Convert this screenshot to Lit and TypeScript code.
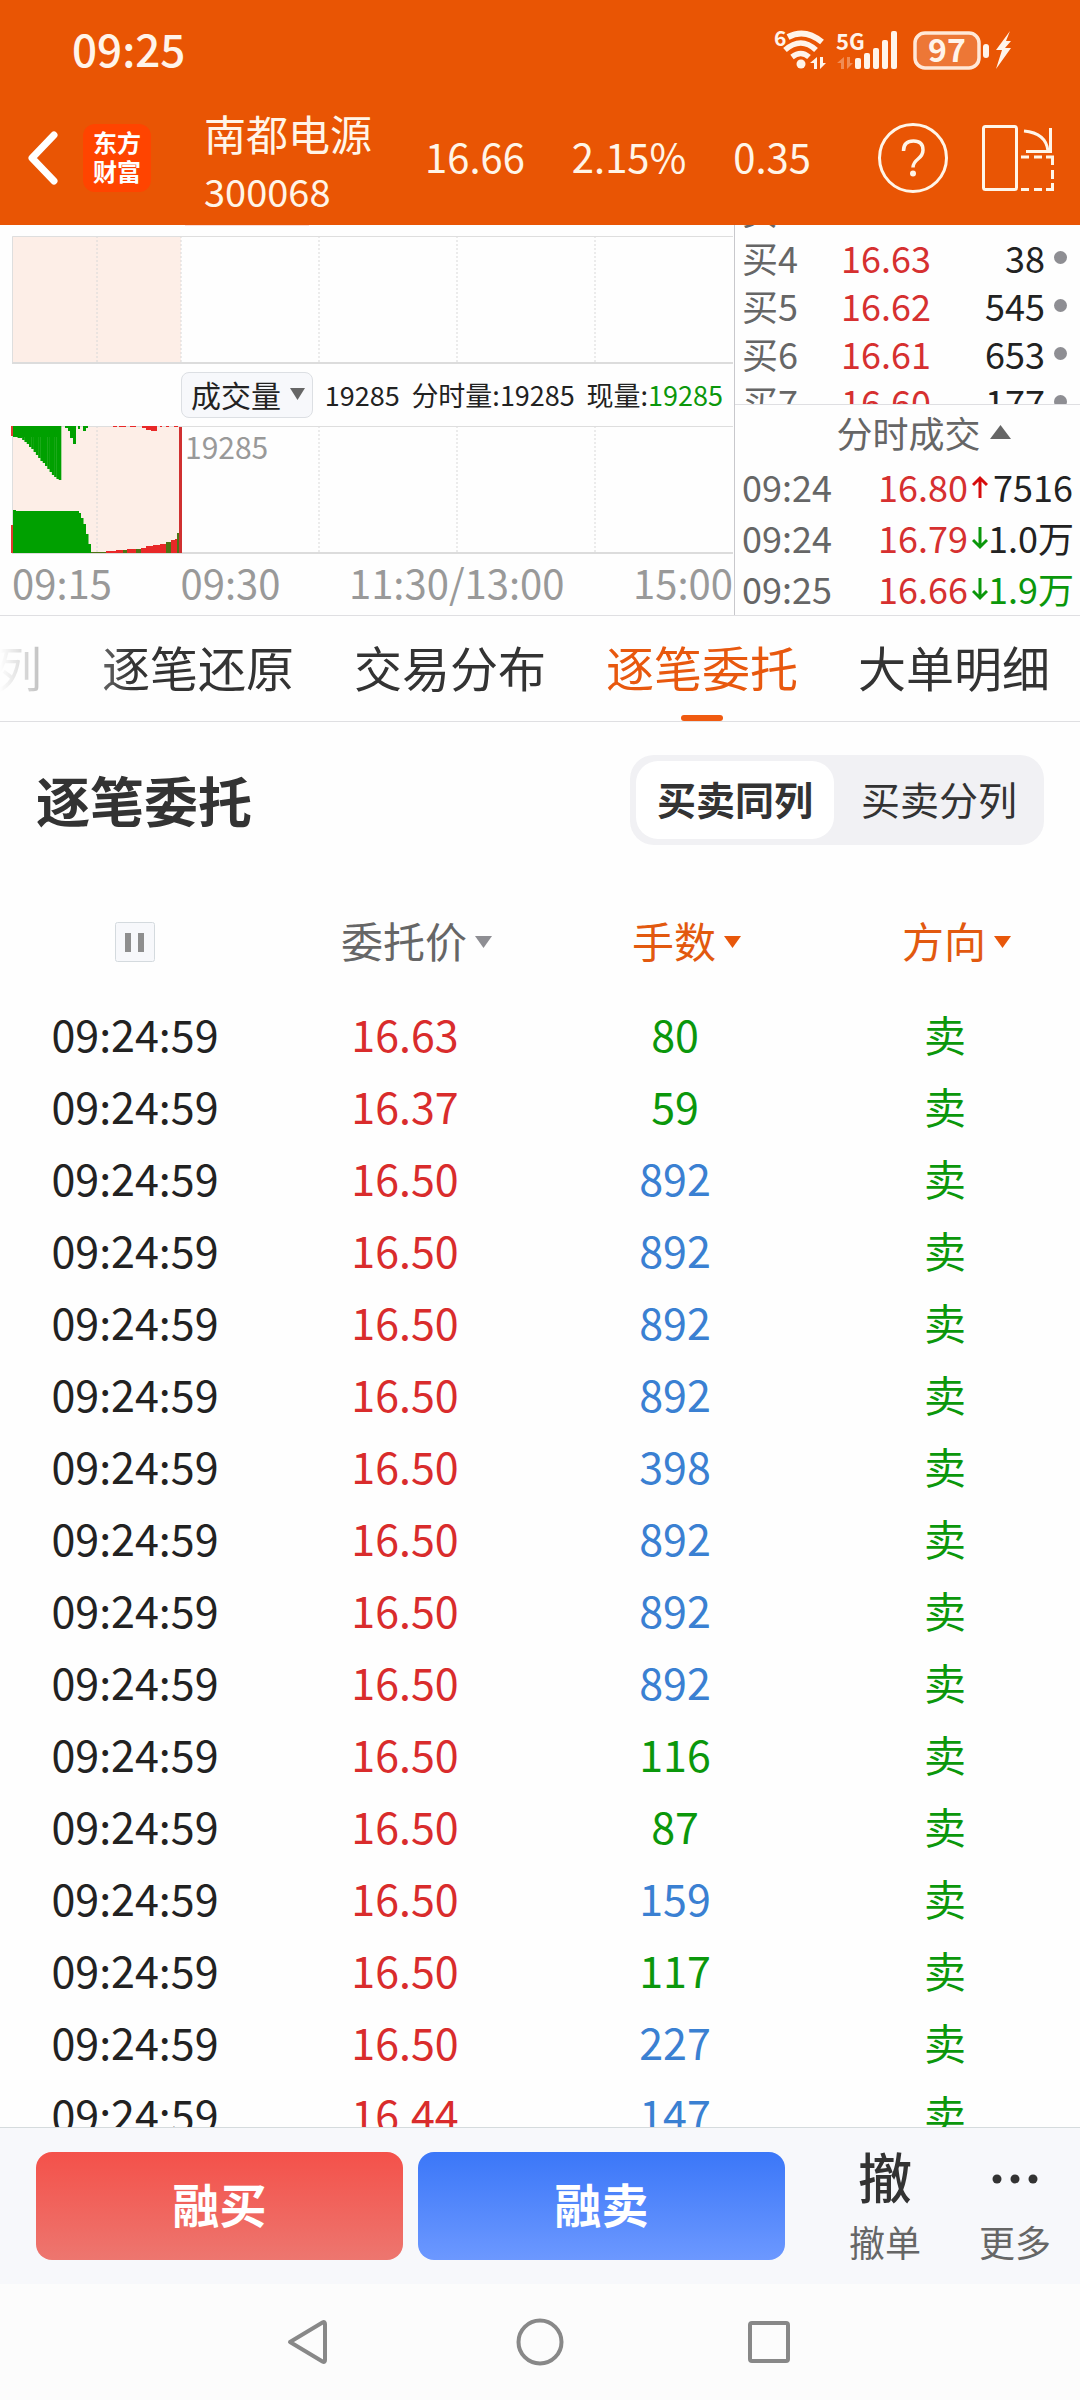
import { LitElement, html, svg, css } from "lit";
import { customElement, property, state } from "lit/decorators.js";
import { classMap } from "lit/directives/class-map.js";

const FONT = css`"Noto Sans CJK SC", "Noto Sans", sans-serif`;

const reset = css`
  * {
    box-sizing: border-box;
  }
  button {
    appearance: none;
    margin: 0;
    padding: 0;
    border: 0;
    background: none;
    color: inherit;
    font: inherit;
    cursor: pointer;
  }
  svg {
    display: block;
    flex: none;
  }
`;

@customElement("status-bar")
class StatusBar extends LitElement {
  static styles = [
    reset,
    css`
      :host {
        display: flex;
        align-items: center;
        justify-content: space-between;
        height: 96px;
        padding: 4px 66px 0 72px;
        color: #fff4ea;
      }
      .time {
        padding-bottom: 4px;
        font-size: 44px;
        line-height: 48px;
        font-weight: 500;
      }
      .icons {
        overflow: visible;
      }
      .icons text {
        font-family: ${FONT};
        font-weight: 700;
        fill: #fff4ea;
      }
    `,
  ];

  render() {
    return html`
      <span class="time">09:25</span>
      <svg class="icons" width="240" height="44" viewBox="0 0 240 44" fill="#fff4ea">
        <text x="0" y="18" font-size="21">6</text>
        <g fill="none" stroke="#fff4ea" stroke-width="6">
          <path d="M14 9 Q31 0 48 14" />
          <path d="M11 22 Q27 8 42 22" stroke-width="5.5" />
          <path d="M18 29 Q27 22 35 29" stroke-width="5.5" />
        </g>
        <circle cx="27" cy="36" r="4.5" />
        <path d="M43 29v12h-3v-6h-4zM46 29v12l6-6h-3v-6z" />
        <text x="62" y="22" font-size="22">5G</text>
        <g opacity="0.35">
          <path d="M70 29v12h-3v-6h-4zM73 29v12l6-6h-3v-6z" />
        </g>
        <rect x="81" y="30" width="6" height="11" rx="2" />
        <rect x="90" y="25" width="6" height="16" rx="2" />
        <rect x="99" y="20" width="6" height="21" rx="2" />
        <rect x="108" y="12" width="6" height="29" rx="2" />
        <rect x="117" y="3" width="6" height="38" rx="2" />
        <rect x="141" y="5" width="64" height="35" rx="10" fill="#ffffff" fill-opacity="0.2" stroke="#ffe8d8" stroke-width="3.5" />
        <text x="173" y="34" font-size="32" text-anchor="middle">97</text>
        <rect x="209" y="16" width="6" height="14" rx="3" />
        <path d="M236 3 222 22h6l-6 19 15-21h-6l6-7h-5z" />
      </svg>
    `;
  }
}

@customElement("stock-header")
class StockHeader extends LitElement {
  static styles = [
    reset,
    css`
      :host {
        display: flex;
        align-items: center;
        height: 129px;
        padding: 0 25px 6px 26px;
        color: #fff5e8;
      }
      .back {
        margin-right: 23px;
      }
      .logo {
        display: grid;
        place-content: center;
        width: 68px;
        height: 68px;
        padding-bottom: 4px;
        border-radius: 12px;
        background: #ff4400;
        color: #fff;
        font-size: 24px;
        line-height: 29px;
        font-weight: 700;
      }
      .name {
        display: grid;
        margin: 0 53px;
        padding-top: 8px;
        font-size: 42px;
        line-height: 58px;
        font-weight: 400;
      }
      .code {
        font-size: 38px;
      }
      .quote {
        display: flex;
        flex: 1;
        justify-content: space-between;
        padding-bottom: 4px;
        font-size: 40px;
        line-height: 58px;
      }
      .tools {
        display: flex;
        align-items: center;
        gap: 32px;
        margin-left: 66px;
      }
    `,
  ];

  render() {
    return html`
      <button class="back" aria-label="返回">
        <svg width="34" height="58" viewBox="0 0 34 58" fill="none" stroke="#fff" stroke-width="7" stroke-linecap="round" stroke-linejoin="round">
          <path d="M28 6 6 29l22 23" />
        </svg>
      </button>
      <span class="logo"><span>东方</span><span>财富</span></span>
      <span class="name"><span>南都电源</span><span class="code">300068</span></span>
      <span class="quote"><span>16.66</span><span>2.15%</span><span>0.35</span></span>
      <span class="tools">
        <button aria-label="帮助">
          <svg width="72" height="72" viewBox="0 0 72 72" fill="none" stroke="#fff5e8" stroke-width="3">
            <circle cx="36" cy="36" r="33.5" />
            <path d="M26.5 29q0-10 10-10 9.5 0 9.5 9 0 5-5 9-5 4-5 8.5" stroke-width="3.5" />
            <circle cx="36" cy="51.5" r="3" fill="#fff5e8" stroke="none" />
          </svg>
        </button>
        <button aria-label="横屏">
          <svg width="74" height="68" viewBox="0 0 74 68" fill="none" stroke="#fff5e8" stroke-width="3">
            <rect x="2.5" y="2.5" width="33" height="63" rx="2" />
            <path d="M43 7Q65 9 67 27M69.5 4v23.5H45" />
            <path d="M40 33h8M53 33h8M65 33h6.5v8M71.5 46v9M71.5 59v6.5H65M61 65.5h-8M48 65.5h-8" />
          </svg>
        </button>
      </span>
    `;
  }
}

/* One bar of the auction chart: [x, y, width, height, colour] in plot units. */
type Bar = [number, number, number, number, string];

const PLOT_W = 721;
const PLOT_H = 127;
const GREEN = "#00a000";
const RED = "#e82828";
const DARK = "#4c7414";

const fallingDepths = [11, 11, 12, 12, 14, 16, 18, 21, 23, 26, 29, 32, 35, 37, 40, 43, 46, 49, 51, 53, 54];
const bars: Bar[] = [
  [-1, 0, 2, 10, "#e03a30"],
  [-1, 99, 2, 28, "#e03a30"],
  [1, 0, 48, 11, GREEN],
  ...fallingDepths.map((d, i): Bar => [1 + i * 2.286, 0, 2.6, d, GREEN]),
  [53, 0, 3, 2, GREEN],
  [56, 0, 2.5, 5, GREEN],
  [58, 0, 3, 12, GREEN],
  [61, 0, 3, 18, GREEN],
  [66, 0, 2, 3, GREEN],
  [71, 0, 3, 5, GREEN],
  [74, 0, 2, 2, GREEN],
  [101, 0, 4, 1, RED],
  [107, 0, 7, 1, RED],
  [118, 0, 6, 1, RED],
  [130, 0, 4, 2, RED],
  [134, 0, 5, 4, RED],
  [139, 0, 6, 5, RED],
  [148, 0, 2, 1, RED],
  [154, 0, 3, 1, RED],
  [162, 0, 4, 1, RED],
  [1, 84, 3, 43, GREEN],
  [4, 85, 63, 42, GREEN],
  [67, 87, 2, 40, GREEN],
  [69, 92, 2.5, 35, GREEN],
  [71, 98, 3, 29, GREEN],
  [74, 108, 2.5, 19, GREEN],
  [76, 118, 3, 9, GREEN],
  [79, 126, 15, 1, DARK],
  [94, 125, 10, 2, RED],
  [104, 124, 7, 3, RED],
  [111, 124, 4, 3, DARK],
  [115, 123, 9, 4, RED],
  [124, 123, 5, 4, DARK],
  [129, 122, 5, 5, RED],
  [134, 120, 7, 7, RED],
  [141, 119, 7, 8, RED],
  [148, 118, 6, 9, RED],
  [154, 116, 5, 11, DARK],
  [159, 114, 4, 13, RED],
  [163, 113, 2, 14, RED],
  [165, 107, 3, 20, DARK],
  [167, 1, 3, 126, "#d03030"],
];

@customElement("auction-chart")
class AuctionChart extends LitElement {
  static styles = [
    reset,
    css`
      :host {
        display: flex;
        flex-direction: column;
        flex: 1;
        min-width: 0;
        padding: 11px 1px 0 12px;
        border-right: 1px solid #c8c8cc;
        background: linear-gradient(#fbdcd6, #fbdcd6) 185px 0 / 124px 1px no-repeat;
      }
      .plot {
        width: 100%;
        height: 128px;
        overflow: visible;
      }
      .legend {
        display: flex;
        align-items: center;
        justify-content: space-between;
        height: 62px;
        padding: 0 10px 0 169px;
        font-size: 27px;
        line-height: 40px;
        color: #222;
      }
      .picker {
        display: flex;
        align-items: center;
        gap: 9px;
        width: 132px;
        height: 46px;
        padding: 0 8px 2px 9px;
        border: 1px solid #dcdfe3;
        border-radius: 8px;
        background: #f7f8fb;
        font-size: 30px;
        line-height: 40px;
        white-space: nowrap;
      }
      .now {
        color: #0b970b;
      }
      .volume {
        display: grid;
      }
      .volume > * {
        grid-area: 1 / 1;
      }
      .peak {
        padding: 0 0 0 173px;
        font-size: 30px;
        line-height: 40px;
        color: #999;
      }
      .axis {
        display: flex;
        justify-content: space-between;
        font-size: 40px;
        line-height: 56px;
        color: #999;
      }
    `,
  ];

  private frame() {
    return svg`
      <rect x="0" y="0" width="169" height=${PLOT_H} fill="#fdeee7" />
      ${[85, 169, 307, 445, 583].map(
        (x) => svg`<line x1=${x} x2=${x} y1="0" y2=${PLOT_H} stroke="#d8d8d8" stroke-dasharray="2 2" />`,
      )}
      <path d="M0.5 127V0.5H721" fill="none" stroke="#dedede" />
      <path d="M0 127H721" fill="none" stroke="#dcdcdc" stroke-width="2" />
    `;
  }

  render() {
    const box = `0 0 ${PLOT_W} 128`;
    return html`
      <svg class="plot" viewBox=${box} preserveAspectRatio="none">${this.frame()}</svg>
      <div class="legend">
        <button class="picker">
          成交量
          <svg width="15" height="12" viewBox="0 0 15 12"><path d="M0 0h15L7.5 12z" fill="#666" /></svg>
        </button>
        <span>19285</span>
        <span>分时量:19285</span>
        <span>现量:<span class="now">19285</span></span>
      </div>
      <div class="volume">
        <svg class="plot" viewBox=${box} preserveAspectRatio="none">
          ${this.frame()}
          ${bars.map(([x, y, w, h, c]) => svg`<rect x=${x} y=${y} width=${w} height=${h} fill=${c} />`)}
        </svg>
        <span class="peak">19285</span>
      </div>
      <div class="axis"><span>09:15</span><span>09:30</span><span>11:30/13:00</span><span>15:00</span></div>
    `;
  }
}

const bids = [
  { label: "买3", price: "", qty: "" },
  { label: "买4", price: "16.63", qty: "38" },
  { label: "买5", price: "16.62", qty: "545" },
  { label: "买6", price: "16.61", qty: "653" },
  { label: "买7", price: "16.60", qty: "177" },
];

const ticks = [
  { time: "09:24", price: "16.80", up: true, qty: "7516", sell: false },
  { time: "09:24", price: "16.79", up: false, qty: "1.0万", sell: false },
  { time: "09:25", price: "16.66", up: false, qty: "1.9万", sell: true },
];

@customElement("order-book")
class OrderBook extends LitElement {
  static styles = [
    reset,
    css`
      :host {
        display: flex;
        flex-direction: column;
        flex: none;
        width: 345px;
        font-size: 36px;
        color: #222;
      }
      .bids {
        height: 180px;
        overflow: hidden;
        border-bottom: 1px solid #dfdfe2;
      }
      .bid {
        display: grid;
        grid-template-columns: 90px 1fr auto 13px;
        align-items: center;
        column-gap: 9px;
        height: 48px;
        padding: 0 13px 0 7px;
        line-height: 48px;
      }
      .bid:first-child {
        margin-top: -40px;
      }
      .label,
      .time {
        color: #666;
      }
      .price {
        color: #d63030;
      }
      .dot {
        width: 13px;
        height: 13px;
        border-radius: 50%;
        background: #8e8e93;
      }
      .toggle {
        display: flex;
        align-items: center;
        justify-content: center;
        gap: 9px;
        height: 56px;
        padding: 0 0 2px 32px;
        line-height: 54px;
        color: #666;
      }
      .tick {
        display: grid;
        grid-template-columns: 136px auto 1fr;
        align-items: center;
        height: 51px;
        padding: 0 7px;
        line-height: 51px;
      }
      .tick .price {
        display: flex;
        align-items: center;
        gap: 4px;
      }
      .qty {
        text-align: right;
        white-space: nowrap;
      }
      .sell {
        color: #0b970b;
      }
    `,
  ];

  render() {
    return html`
      <div class="bids">
        ${bids.map(
          (b) => html`<div class="bid">
            <span class="label">${b.label}</span><span class="price">${b.price}</span>
            <span>${b.qty}</span>${b.qty ? html`<i class="dot"></i>` : ""}
          </div>`,
        )}
      </div>
      <button class="toggle">
        分时成交
        <svg width="21" height="14" viewBox="0 0 21 14"><path d="M10.5 0 21 14H0z" fill="#666" /></svg>
      </button>
      ${ticks.map(
        (t) => html`<div class="tick">
          <span class="time">${t.time}</span>
          <span class="price">
            ${t.price}
            <svg width="16" height="24" viewBox="0 0 16 24" fill="none" stroke=${t.up ? "#d60c0c" : "#0b970b"} stroke-width="3">
              <path d=${t.up ? "M8 23V3M1 10l7-7 7 7" : "M8 1v20M1 14l7 7 7-7"} />
            </svg>
          </span>
          <span class=${classMap({ qty: true, sell: t.sell })}>${t.qty}</span>
        </div>`,
      )}
    `;
  }
}

@customElement("tab-strip")
class TabStrip extends LitElement {
  @property() active = "逐笔委托";

  static styles = [
    reset,
    css`
      :host {
        display: block;
        overflow: hidden;
        border-top: 1px solid #dfdfe2;
        border-bottom: 1px solid #dfdfe2;
      }
      .tabs {
        display: flex;
        gap: 60px;
        height: 105px;
        margin-left: -6px;
        -webkit-mask-image: linear-gradient(to right, transparent 6px, #000 140px);
        mask-image: linear-gradient(to right, transparent 6px, #000 140px);
      }
      .tab {
        position: relative;
        flex: none;
        padding-bottom: 6px;
        font-size: 48px;
        line-height: 96px;
        color: #333;
      }
      .on {
        color: #e8580e;
      }
      .on::after {
        content: "";
        position: absolute;
        left: 50%;
        bottom: 0;
        width: 42px;
        height: 6px;
        margin-left: -21px;
        border-radius: 3px;
        background: #f05a10;
      }
    `,
  ];

  render() {
    return html`<nav class="tabs">
      ${["列", "逐笔还原", "交易分布", "逐笔委托", "大单明细"].map(
        (t) => html`<button class=${classMap({ tab: true, on: t === this.active })} @click=${() => (this.active = t)}>${t}</button>`,
      )}
    </nav>`;
  }
}

/* [price, lots, large order?] */
const orders: [string, number, boolean][] = [
  ["16.63", 80, false],
  ["16.37", 59, false],
  ["16.50", 892, true],
  ["16.50", 892, true],
  ["16.50", 892, true],
  ["16.50", 892, true],
  ["16.50", 398, true],
  ["16.50", 892, true],
  ["16.50", 892, true],
  ["16.50", 892, true],
  ["16.50", 116, false],
  ["16.50", 87, false],
  ["16.50", 159, true],
  ["16.50", 117, false],
  ["16.50", 227, true],
  ["16.44", 147, true],
];

@customElement("order-list")
class OrderList extends LitElement {
  @state() private merged = true;

  static styles = [
    reset,
    css`
      :host {
        display: block;
        flex: 1 1 0;
        min-height: 0;
        overflow: hidden;
      }
      .head {
        display: flex;
        align-items: center;
        justify-content: space-between;
        height: 160px;
        padding: 0 36px 4px;
      }
      h2 {
        margin: 0;
        font-size: 54px;
        line-height: 72px;
        font-weight: 700;
        color: #333;
      }
      .switch {
        display: flex;
        padding: 6px;
        border-radius: 24px;
        background: #f1f1f4;
      }
      .option {
        height: 78px;
        padding: 0 21px 4px;
        border-radius: 22px;
        font-size: 39px;
        line-height: 72px;
        color: #333;
      }
      .option + .option {
        padding-left: 27px;
      }
      .chosen {
        background: #fff;
        font-weight: 700;
      }
      table {
        width: 100%;
        border-collapse: collapse;
        table-layout: fixed;
        font-size: 43px;
        text-align: center;
      }
      th {
        height: 116px;
        padding: 0;
        font-size: 42px;
        line-height: 60px;
        font-weight: 400;
        color: #666;
      }
      td {
        height: 72px;
        padding: 0 0 2px;
        line-height: 70px;
        color: #222;
      }
      .sort {
        display: inline-flex;
        align-items: center;
        gap: 8px;
        padding-left: 23px;
      }
      .sort svg {
        margin-top: 4px;
      }
      .sorted {
        color: #e2590f;
      }
      .pause {
        display: block;
        margin: 4px auto 0;
      }
      .price {
        color: #d92c2c;
      }
      .small,
      .side {
        color: #0b970b;
      }
      .side {
        padding-bottom: 0;
        font-size: 42px;
      }
      .large {
        color: #3a80d2;
      }
    `,
  ];

  private column(label: string, sorted: boolean) {
    return html`<th>
      <button class=${classMap({ sort: true, sorted })}>
        ${label}
        <svg width="17" height="12" viewBox="0 0 17 12"><path d="M0 0h17L8.5 12z" fill=${sorted ? "#e8570a" : "#8e8e93"} /></svg>
      </button>
    </th>`;
  }

  render() {
    return html`
      <div class="head">
        <h2>逐笔委托</h2>
        <div class="switch">
          <button class=${classMap({ option: true, chosen: this.merged })} @click=${() => (this.merged = true)}>买卖同列</button>
          <button class=${classMap({ option: true, chosen: !this.merged })} @click=${() => (this.merged = false)}>买卖分列</button>
        </div>
      </div>
      <table>
        <thead>
          <tr>
            <th>
              <button class="pause" aria-label="暂停">
                <svg width="40" height="40" viewBox="0 0 40 40">
                  <rect x="0.5" y="0.5" width="39" height="39" rx="2" fill="#f7f8fb" stroke="#d4dade" />
                  <path d="M10 11h6v19h-6zM23 11h6v19h-6z" fill="#8e8e8e" />
                </svg>
              </button>
            </th>
            ${this.column("委托价", false)} ${this.column("手数", true)} ${this.column("方向", true)}
          </tr>
        </thead>
        <tbody>
          ${orders.map(
            ([price, lots, large]) => html`<tr>
              <td>09:24:59</td>
              <td class="price">${price}</td>
              <td class=${large ? "large" : "small"}>${lots}</td>
              <td class="side">卖</td>
            </tr>`,
          )}
        </tbody>
      </table>
    `;
  }
}

@customElement("trade-bar")
class TradeBar extends LitElement {
  static styles = [
    reset,
    css`
      :host {
        display: flex;
        align-items: center;
        height: 157px;
        padding: 0 0 0 36px;
        border-top: 1px solid #d5dbdd;
        background: #f7f8fb;
      }
      .trade {
        flex: 1;
        height: 108px;
        padding-bottom: 6px;
        border-radius: 16px;
        color: #fff;
        font-size: 47px;
        line-height: 100px;
        font-weight: 700;
      }
      .buy {
        margin-right: 15px;
        background: linear-gradient(#f4514a, #ed766f);
      }
      .sell {
        margin-right: 35px;
        background: linear-gradient(#3b77f8, #6c98ff);
      }
      .more {
        display: grid;
        grid-template-rows: 70px 60px;
        place-items: center;
        width: 130px;
        font-size: 36px;
        line-height: 60px;
        color: #666;
      }
      .glyph {
        font-size: 54px;
        font-weight: 500;
        color: #333;
      }
      .dots {
        margin-top: 6px;
      }
    `,
  ];

  render() {
    return html`
      <button class="trade buy">融买</button>
      <button class="trade sell">融卖</button>
      <button class="more"><span class="glyph">撤</span><span>撤单</span></button>
      <button class="more">
        <svg class="dots" width="46" height="10" viewBox="0 0 46 10" fill="#333">
          <circle cx="5" cy="5" r="4.5" /><circle cx="23" cy="5" r="4.5" /><circle cx="41" cy="5" r="4.5" />
        </svg>
        <span>更多</span>
      </button>
    `;
  }
}

@customElement("system-nav")
class SystemNav extends LitElement {
  static styles = [
    reset,
    css`
      :host {
        display: flex;
        align-items: center;
        justify-content: center;
        gap: 180px;
        height: 116px;
        background: #fcfcfc;
      }
    `,
  ];

  render() {
    const shapes = [
      { name: "后退", shape: svg`<path d="M5 25 37.5 5.5Q40 4 40 7v36q0 3-2.5 1.5z" stroke-linejoin="round" />` },
      { name: "主页", shape: svg`<circle cx="25" cy="25" r="21.5" />` },
      { name: "多任务", shape: svg`<rect x="5" y="6" width="38" height="38" rx="2" />` },
    ];
    return html`${shapes.map(
      (s) => html`<button aria-label=${s.name}>
        <svg width="50" height="50" viewBox="0 0 50 50" fill="none" stroke="#888" stroke-width="4">${s.shape}</svg>
      </button>`,
    )}`;
  }
}

@customElement("app-root")
class AppRoot extends LitElement {
  static styles = [
    reset,
    css`
      :host {
        display: flex;
        flex-direction: column;
        height: 100vh;
        background: #fefefe;
        font-family: ${FONT};
      }
      .top {
        background: #e95504;
      }
      .market {
        display: flex;
        height: 390px;
      }
    `,
  ];

  render() {
    return html`
      <header class="top">
        <status-bar></status-bar>
        <stock-header></stock-header>
      </header>
      <section class="market">
        <auction-chart></auction-chart>
        <order-book></order-book>
      </section>
      <tab-strip></tab-strip>
      <order-list></order-list>
      <trade-bar></trade-bar>
      <system-nav></system-nav>
    `;
  }
}
